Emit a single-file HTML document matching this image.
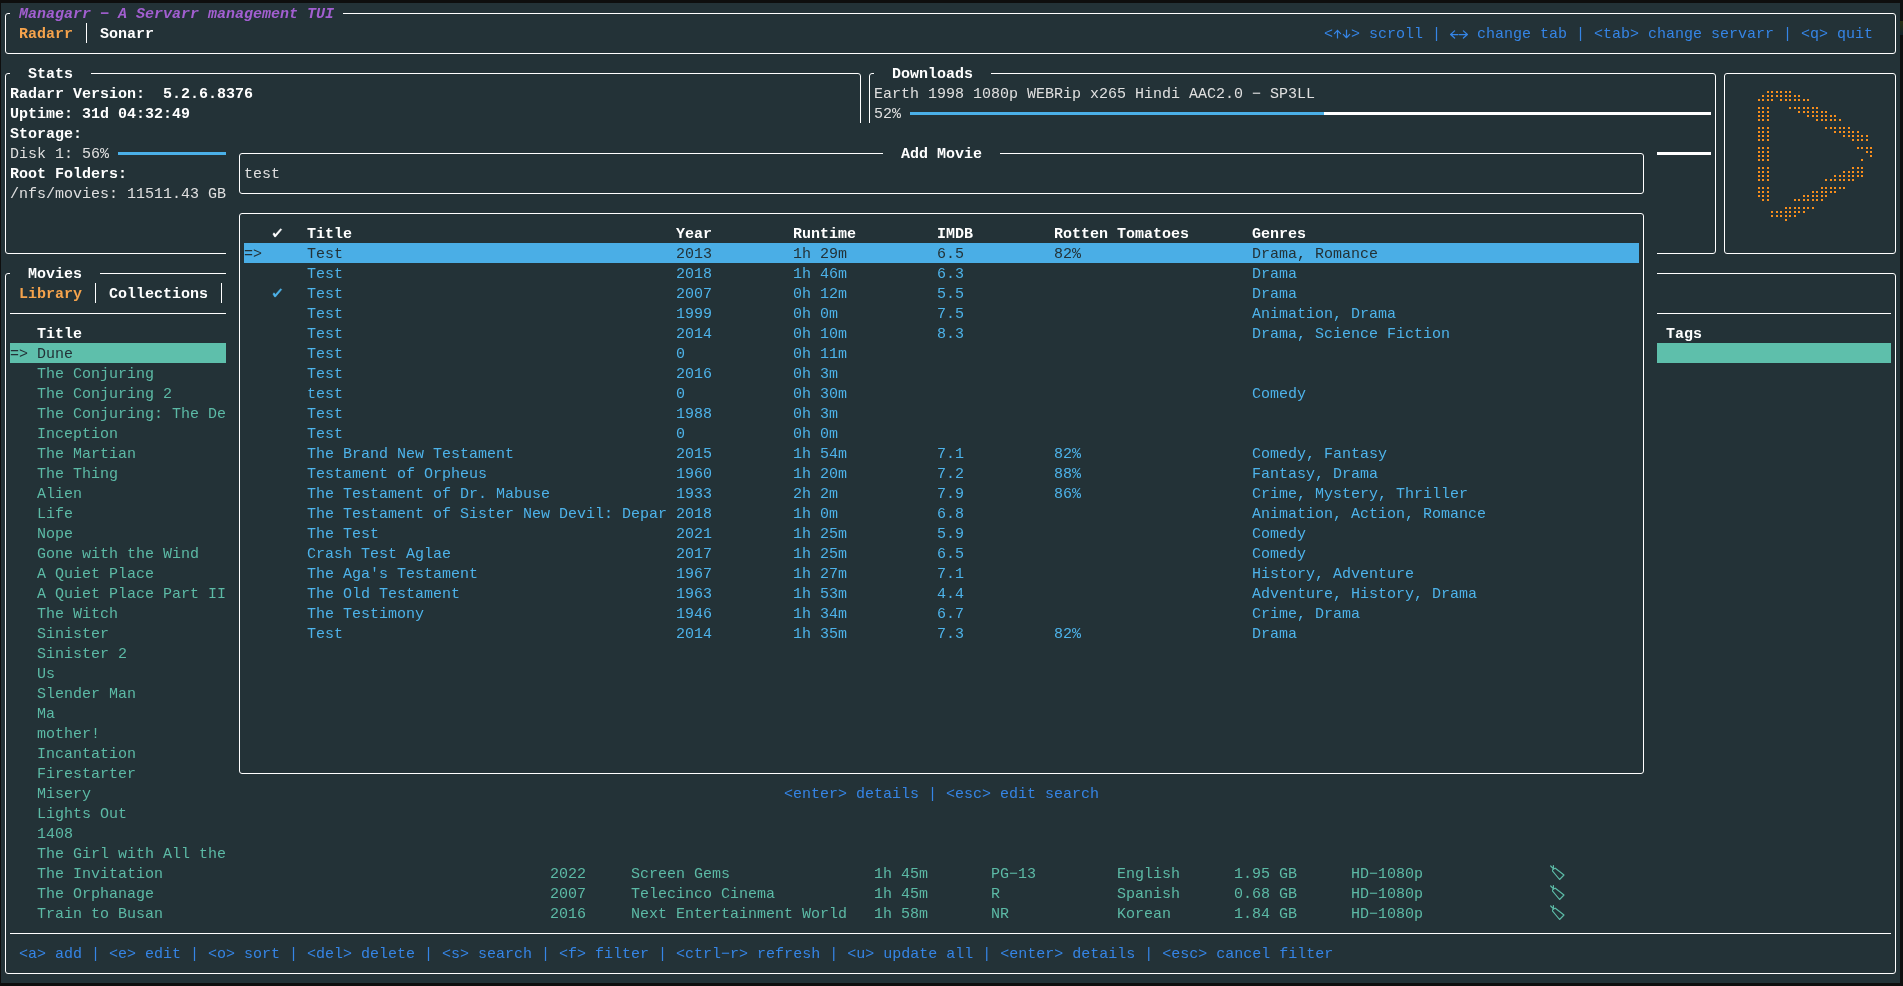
<!DOCTYPE html>
<html><head><meta charset="utf-8"><title>Managarr</title>
<style>
html,body{margin:0;padding:0;background:#0e0e0e;width:1903px;height:986px;overflow:hidden}
#term{position:absolute;left:1px;top:3px;width:1899px;height:980px;background:#233237;overflow:hidden}
#scr{position:absolute;left:0;top:0;width:1903px;height:986px;will-change:transform}
.t{position:absolute;white-space:pre;font-family:"Liberation Mono",monospace;font-size:15px;line-height:20px;height:20px;padding-top:2px;box-sizing:border-box}
.r{position:absolute}
.b{position:absolute;box-sizing:border-box;border:1px solid #fff}
.s{position:absolute;overflow:visible}
</style></head><body>
<div id="term"></div>
<div id="scr">
<div class="b" style="left:5px;top:13px;width:1891px;height:41px;border-color:#ffffff;border-radius:3px"></div>
<div class="t" style="left:10px;top:3px;color:#a25fd0;font-weight:bold;font-style:italic;background:#233237"> Managarr − A Servarr management TUI </div>
<div class="t" style="left:19px;top:23px;color:#f5a34c;font-weight:bold">Radarr</div>
<div class="r" style="left:86px;top:23px;width:1px;height:20px;background:#ffffff"></div>
<div class="t" style="left:100px;top:23px;color:#ffffff;font-weight:bold">Sonarr</div>
<div class="t" style="left:1324px;top:23px;color:#3585e6">&lt;  &gt; scroll |    change tab | &lt;tab&gt; change servarr | &lt;q&gt; quit</div>
<svg class="s" style="left:1333px;top:23px" width="18" height="20" viewBox="0 0 18 20" fill="none" stroke="#3585e6" stroke-width="1.25" stroke-linecap="round" stroke-linejoin="round"><path d="M4.5 7.4 V14.9 M1.4 10.6 L4.5 7.4 L7.6 10.6"/><path d="M13.5 7.1 V14.6 M10.3 11.4 L13.5 14.7 L16.7 11.4"/></svg>
<svg class="s" style="left:1450px;top:23px" width="18" height="20" viewBox="0 0 18 20" fill="none" stroke="#3585e6" stroke-width="1.25" stroke-linecap="round" stroke-linejoin="round"><path d="M0.6 11.5 H8 M4.6 7.9 L0.6 11.5 L4.6 15.0"/><path d="M9.4 11.5 H17.4 M13.4 7.9 L17.4 11.5 L13.4 15.0"/></svg>
<div class="b" style="left:5px;top:73px;width:856px;height:181px;border-color:#ffffff;border-radius:3px"></div>
<div class="t" style="left:10px;top:63px;color:#ffffff;font-weight:bold;background:#233237">  Stats  </div>
<div class="t" style="left:10px;top:83px;color:#ffffff;font-weight:bold">Radarr Version:  5.2.6.8376</div>
<div class="t" style="left:10px;top:103px;color:#ffffff;font-weight:bold">Uptime: 31d 04:32:49</div>
<div class="t" style="left:10px;top:123px;color:#ffffff;font-weight:bold">Storage:</div>
<div class="t" style="left:10px;top:143px;color:#e0e0e0">Disk 1: 56%</div>
<div class="r" style="left:118px;top:152px;width:738px;height:3px;background:#4ab0e8"></div>
<div class="t" style="left:10px;top:163px;color:#ffffff;font-weight:bold">Root Folders:</div>
<div class="t" style="left:10px;top:183px;color:#e0e0e0">/nfs/movies: 11511.43 GB</div>
<div class="b" style="left:869px;top:73px;width:847px;height:181px;border-color:#ffffff;border-radius:3px"></div>
<div class="t" style="left:874px;top:63px;color:#ffffff;font-weight:bold;background:#233237">  Downloads  </div>
<div class="t" style="left:874px;top:83px;color:#e0e0e0">Earth 1998 1080p WEBRip x265 Hindi AAC2.0 − SP3LL</div>
<div class="t" style="left:874px;top:103px;color:#e0e0e0">52%</div>
<div class="r" style="left:910px;top:112px;width:414px;height:3px;background:#4ab0e8"></div>
<div class="r" style="left:1324px;top:112px;width:387px;height:3px;background:#ffffff"></div>
<div class="r" style="left:1657px;top:152px;width:54px;height:3px;background:#ffffff"></div>
<div class="b" style="left:1724px;top:73px;width:172px;height:181px;border-color:#ffffff;border-radius:3px"></div>
<div class="b" style="left:5px;top:273px;width:1891px;height:701px;border-color:#ffffff;border-radius:3px"></div>
<div class="t" style="left:10px;top:263px;color:#ffffff;font-weight:bold;background:#233237">  Movies  </div>
<div class="t" style="left:19px;top:283px;color:#f5a34c;font-weight:bold">Library</div>
<div class="r" style="left:95px;top:283px;width:1px;height:20px;background:#ffffff"></div>
<div class="t" style="left:109px;top:283px;color:#ffffff;font-weight:bold">Collections</div>
<div class="r" style="left:221px;top:283px;width:1px;height:20px;background:#ffffff"></div>
<div class="r" style="left:10px;top:313px;width:1881px;height:1px;background:#ffffff"></div>
<div class="t" style="left:37px;top:323px;color:#ffffff;font-weight:bold">Title</div>
<div class="t" style="left:1666px;top:323px;color:#ffffff;font-weight:bold">Tags</div>
<div class="r" style="left:10px;top:343px;width:1881px;height:20px;background:#5ebfab"></div>
<div class="t" style="left:10px;top:343px;color:#233237">=&gt; Dune</div>
<div class="t" style="left:37px;top:363px;color:#5cbaa6">The Conjuring</div>
<div class="t" style="left:37px;top:383px;color:#5cbaa6">The Conjuring 2</div>
<div class="t" style="left:37px;top:403px;color:#5cbaa6">The Conjuring: The De</div>
<div class="t" style="left:37px;top:423px;color:#5cbaa6">Inception</div>
<div class="t" style="left:37px;top:443px;color:#5cbaa6">The Martian</div>
<div class="t" style="left:37px;top:463px;color:#5cbaa6">The Thing</div>
<div class="t" style="left:37px;top:483px;color:#5cbaa6">Alien</div>
<div class="t" style="left:37px;top:503px;color:#5cbaa6">Life</div>
<div class="t" style="left:37px;top:523px;color:#5cbaa6">Nope</div>
<div class="t" style="left:37px;top:543px;color:#5cbaa6">Gone with the Wind</div>
<div class="t" style="left:37px;top:563px;color:#5cbaa6">A Quiet Place</div>
<div class="t" style="left:37px;top:583px;color:#5cbaa6">A Quiet Place Part II</div>
<div class="t" style="left:37px;top:603px;color:#5cbaa6">The Witch</div>
<div class="t" style="left:37px;top:623px;color:#5cbaa6">Sinister</div>
<div class="t" style="left:37px;top:643px;color:#5cbaa6">Sinister 2</div>
<div class="t" style="left:37px;top:663px;color:#5cbaa6">Us</div>
<div class="t" style="left:37px;top:683px;color:#5cbaa6">Slender Man</div>
<div class="t" style="left:37px;top:703px;color:#5cbaa6">Ma</div>
<div class="t" style="left:37px;top:723px;color:#5cbaa6">mother!</div>
<div class="t" style="left:37px;top:743px;color:#5cbaa6">Incantation</div>
<div class="t" style="left:37px;top:763px;color:#5cbaa6">Firestarter</div>
<div class="t" style="left:37px;top:783px;color:#5cbaa6">Misery</div>
<div class="t" style="left:37px;top:803px;color:#5cbaa6">Lights Out</div>
<div class="t" style="left:37px;top:823px;color:#5cbaa6">1408</div>
<div class="t" style="left:37px;top:843px;color:#5cbaa6">The Girl with All the</div>
<div class="t" style="left:37px;top:863px;color:#5cbaa6">The Invitation</div>
<div class="t" style="left:37px;top:883px;color:#5cbaa6">The Orphanage</div>
<div class="t" style="left:37px;top:903px;color:#5cbaa6">Train to Busan</div>
<div class="t" style="left:550px;top:863px;color:#5cbaa6">2022</div>
<div class="t" style="left:631px;top:863px;color:#5cbaa6">Screen Gems</div>
<div class="t" style="left:874px;top:863px;color:#5cbaa6">1h 45m</div>
<div class="t" style="left:991px;top:863px;color:#5cbaa6">PG−13</div>
<div class="t" style="left:1117px;top:863px;color:#5cbaa6">English</div>
<div class="t" style="left:1234px;top:863px;color:#5cbaa6">1.95 GB</div>
<div class="t" style="left:1351px;top:863px;color:#5cbaa6">HD−1080p</div>
<svg class="s" style="left:1547px;top:863px" width="20" height="20" viewBox="0 0 20 20"><path d="M3.7 3.0 L6.5 5.9 M6.4 2.6 L6.5 5.9" stroke="#5cbaa6" stroke-width="1.2" fill="none" stroke-linecap="round"/><path d="M8.3 5.2 L17.0 12.0 L12.6 16.5 L5.6 8.2 Q5.0 6.6 6.5 5.9 Z" stroke="#5cbaa6" stroke-width="1.15" fill="none" stroke-linejoin="round"/></svg>
<div class="t" style="left:550px;top:883px;color:#5cbaa6">2007</div>
<div class="t" style="left:631px;top:883px;color:#5cbaa6">Telecinco Cinema</div>
<div class="t" style="left:874px;top:883px;color:#5cbaa6">1h 45m</div>
<div class="t" style="left:991px;top:883px;color:#5cbaa6">R</div>
<div class="t" style="left:1117px;top:883px;color:#5cbaa6">Spanish</div>
<div class="t" style="left:1234px;top:883px;color:#5cbaa6">0.68 GB</div>
<div class="t" style="left:1351px;top:883px;color:#5cbaa6">HD−1080p</div>
<svg class="s" style="left:1547px;top:883px" width="20" height="20" viewBox="0 0 20 20"><path d="M3.7 3.0 L6.5 5.9 M6.4 2.6 L6.5 5.9" stroke="#5cbaa6" stroke-width="1.2" fill="none" stroke-linecap="round"/><path d="M8.3 5.2 L17.0 12.0 L12.6 16.5 L5.6 8.2 Q5.0 6.6 6.5 5.9 Z" stroke="#5cbaa6" stroke-width="1.15" fill="none" stroke-linejoin="round"/></svg>
<div class="t" style="left:550px;top:903px;color:#5cbaa6">2016</div>
<div class="t" style="left:631px;top:903px;color:#5cbaa6">Next Entertainment World</div>
<div class="t" style="left:874px;top:903px;color:#5cbaa6">1h 58m</div>
<div class="t" style="left:991px;top:903px;color:#5cbaa6">NR</div>
<div class="t" style="left:1117px;top:903px;color:#5cbaa6">Korean</div>
<div class="t" style="left:1234px;top:903px;color:#5cbaa6">1.84 GB</div>
<div class="t" style="left:1351px;top:903px;color:#5cbaa6">HD−1080p</div>
<svg class="s" style="left:1547px;top:903px" width="20" height="20" viewBox="0 0 20 20"><path d="M3.7 3.0 L6.5 5.9 M6.4 2.6 L6.5 5.9" stroke="#5cbaa6" stroke-width="1.2" fill="none" stroke-linecap="round"/><path d="M8.3 5.2 L17.0 12.0 L12.6 16.5 L5.6 8.2 Q5.0 6.6 6.5 5.9 Z" stroke="#5cbaa6" stroke-width="1.15" fill="none" stroke-linejoin="round"/></svg>
<div class="r" style="left:10px;top:933px;width:1881px;height:1px;background:#ffffff"></div>
<div class="t" style="left:19px;top:943px;color:#3585e6">&lt;a&gt; add | &lt;e&gt; edit | &lt;o&gt; sort | &lt;del&gt; delete | &lt;s&gt; search | &lt;f&gt; filter | &lt;ctrl−r&gt; refresh | &lt;u&gt; update all | &lt;enter&gt; details | &lt;esc&gt; cancel filter</div>
<div class="r" style="left:226px;top:123px;width:1431px;height:740px;background:#233237"></div>
<div class="b" style="left:239px;top:153px;width:1405px;height:41px;border-color:#ffffff;border-radius:3px"></div>
<div class="t" style="left:883px;top:143px;color:#ffffff;font-weight:bold;background:#233237">  Add Movie  </div>
<div class="t" style="left:244px;top:163px;color:#e0e0e0">test</div>
<div class="b" style="left:239px;top:213px;width:1405px;height:561px;border-color:#ffffff;border-radius:3px"></div>
<svg class="s" style="left:271px;top:223px" width="14" height="20" viewBox="0 0 14 20"><path d="M1.9 10.9 L3.1 9.8 L4.4 11.5 L9.6 5.7 L10.7 6.6 L4.5 13.9 L3.6 13.9 Z" fill="#ffffff" stroke="#ffffff" stroke-width="0.6" stroke-linejoin="round"/></svg>
<div class="t" style="left:307px;top:223px;color:#ffffff;font-weight:bold">Title</div>
<div class="t" style="left:676px;top:223px;color:#ffffff;font-weight:bold">Year</div>
<div class="t" style="left:793px;top:223px;color:#ffffff;font-weight:bold">Runtime</div>
<div class="t" style="left:937px;top:223px;color:#ffffff;font-weight:bold">IMDB</div>
<div class="t" style="left:1054px;top:223px;color:#ffffff;font-weight:bold">Rotten Tomatoes</div>
<div class="t" style="left:1252px;top:223px;color:#ffffff;font-weight:bold">Genres</div>
<div class="r" style="left:244px;top:243px;width:1395px;height:20px;background:#4aaee6"></div>
<div class="t" style="left:244px;top:243px;color:#233237">=&gt;</div>
<div class="t" style="left:307px;top:243px;color:#233237">Test</div>
<div class="t" style="left:676px;top:243px;color:#233237">2013</div>
<div class="t" style="left:793px;top:243px;color:#233237">1h 29m</div>
<div class="t" style="left:937px;top:243px;color:#233237">6.5</div>
<div class="t" style="left:1054px;top:243px;color:#233237">82%</div>
<div class="t" style="left:1252px;top:243px;color:#233237">Drama, Romance</div>
<div class="t" style="left:307px;top:263px;color:#4db3ea">Test</div>
<div class="t" style="left:676px;top:263px;color:#4db3ea">2018</div>
<div class="t" style="left:793px;top:263px;color:#4db3ea">1h 46m</div>
<div class="t" style="left:937px;top:263px;color:#4db3ea">6.3</div>
<div class="t" style="left:1252px;top:263px;color:#4db3ea">Drama</div>
<div class="t" style="left:307px;top:283px;color:#4db3ea">Test</div>
<div class="t" style="left:676px;top:283px;color:#4db3ea">2007</div>
<div class="t" style="left:793px;top:283px;color:#4db3ea">0h 12m</div>
<div class="t" style="left:937px;top:283px;color:#4db3ea">5.5</div>
<div class="t" style="left:1252px;top:283px;color:#4db3ea">Drama</div>
<div class="t" style="left:307px;top:303px;color:#4db3ea">Test</div>
<div class="t" style="left:676px;top:303px;color:#4db3ea">1999</div>
<div class="t" style="left:793px;top:303px;color:#4db3ea">0h 0m</div>
<div class="t" style="left:937px;top:303px;color:#4db3ea">7.5</div>
<div class="t" style="left:1252px;top:303px;color:#4db3ea">Animation, Drama</div>
<div class="t" style="left:307px;top:323px;color:#4db3ea">Test</div>
<div class="t" style="left:676px;top:323px;color:#4db3ea">2014</div>
<div class="t" style="left:793px;top:323px;color:#4db3ea">0h 10m</div>
<div class="t" style="left:937px;top:323px;color:#4db3ea">8.3</div>
<div class="t" style="left:1252px;top:323px;color:#4db3ea">Drama, Science Fiction</div>
<div class="t" style="left:307px;top:343px;color:#4db3ea">Test</div>
<div class="t" style="left:676px;top:343px;color:#4db3ea">0</div>
<div class="t" style="left:793px;top:343px;color:#4db3ea">0h 11m</div>
<div class="t" style="left:307px;top:363px;color:#4db3ea">Test</div>
<div class="t" style="left:676px;top:363px;color:#4db3ea">2016</div>
<div class="t" style="left:793px;top:363px;color:#4db3ea">0h 3m</div>
<div class="t" style="left:307px;top:383px;color:#4db3ea">test</div>
<div class="t" style="left:676px;top:383px;color:#4db3ea">0</div>
<div class="t" style="left:793px;top:383px;color:#4db3ea">0h 30m</div>
<div class="t" style="left:1252px;top:383px;color:#4db3ea">Comedy</div>
<div class="t" style="left:307px;top:403px;color:#4db3ea">Test</div>
<div class="t" style="left:676px;top:403px;color:#4db3ea">1988</div>
<div class="t" style="left:793px;top:403px;color:#4db3ea">0h 3m</div>
<div class="t" style="left:307px;top:423px;color:#4db3ea">Test</div>
<div class="t" style="left:676px;top:423px;color:#4db3ea">0</div>
<div class="t" style="left:793px;top:423px;color:#4db3ea">0h 0m</div>
<div class="t" style="left:307px;top:443px;color:#4db3ea">The Brand New Testament</div>
<div class="t" style="left:676px;top:443px;color:#4db3ea">2015</div>
<div class="t" style="left:793px;top:443px;color:#4db3ea">1h 54m</div>
<div class="t" style="left:937px;top:443px;color:#4db3ea">7.1</div>
<div class="t" style="left:1054px;top:443px;color:#4db3ea">82%</div>
<div class="t" style="left:1252px;top:443px;color:#4db3ea">Comedy, Fantasy</div>
<div class="t" style="left:307px;top:463px;color:#4db3ea">Testament of Orpheus</div>
<div class="t" style="left:676px;top:463px;color:#4db3ea">1960</div>
<div class="t" style="left:793px;top:463px;color:#4db3ea">1h 20m</div>
<div class="t" style="left:937px;top:463px;color:#4db3ea">7.2</div>
<div class="t" style="left:1054px;top:463px;color:#4db3ea">88%</div>
<div class="t" style="left:1252px;top:463px;color:#4db3ea">Fantasy, Drama</div>
<div class="t" style="left:307px;top:483px;color:#4db3ea">The Testament of Dr. Mabuse</div>
<div class="t" style="left:676px;top:483px;color:#4db3ea">1933</div>
<div class="t" style="left:793px;top:483px;color:#4db3ea">2h 2m</div>
<div class="t" style="left:937px;top:483px;color:#4db3ea">7.9</div>
<div class="t" style="left:1054px;top:483px;color:#4db3ea">86%</div>
<div class="t" style="left:1252px;top:483px;color:#4db3ea">Crime, Mystery, Thriller</div>
<div class="t" style="left:307px;top:503px;color:#4db3ea">The Testament of Sister New Devil: Depar</div>
<div class="t" style="left:676px;top:503px;color:#4db3ea">2018</div>
<div class="t" style="left:793px;top:503px;color:#4db3ea">1h 0m</div>
<div class="t" style="left:937px;top:503px;color:#4db3ea">6.8</div>
<div class="t" style="left:1252px;top:503px;color:#4db3ea">Animation, Action, Romance</div>
<div class="t" style="left:307px;top:523px;color:#4db3ea">The Test</div>
<div class="t" style="left:676px;top:523px;color:#4db3ea">2021</div>
<div class="t" style="left:793px;top:523px;color:#4db3ea">1h 25m</div>
<div class="t" style="left:937px;top:523px;color:#4db3ea">5.9</div>
<div class="t" style="left:1252px;top:523px;color:#4db3ea">Comedy</div>
<div class="t" style="left:307px;top:543px;color:#4db3ea">Crash Test Aglae</div>
<div class="t" style="left:676px;top:543px;color:#4db3ea">2017</div>
<div class="t" style="left:793px;top:543px;color:#4db3ea">1h 25m</div>
<div class="t" style="left:937px;top:543px;color:#4db3ea">6.5</div>
<div class="t" style="left:1252px;top:543px;color:#4db3ea">Comedy</div>
<div class="t" style="left:307px;top:563px;color:#4db3ea">The Aga&#x27;s Testament</div>
<div class="t" style="left:676px;top:563px;color:#4db3ea">1967</div>
<div class="t" style="left:793px;top:563px;color:#4db3ea">1h 27m</div>
<div class="t" style="left:937px;top:563px;color:#4db3ea">7.1</div>
<div class="t" style="left:1252px;top:563px;color:#4db3ea">History, Adventure</div>
<div class="t" style="left:307px;top:583px;color:#4db3ea">The Old Testament</div>
<div class="t" style="left:676px;top:583px;color:#4db3ea">1963</div>
<div class="t" style="left:793px;top:583px;color:#4db3ea">1h 53m</div>
<div class="t" style="left:937px;top:583px;color:#4db3ea">4.4</div>
<div class="t" style="left:1252px;top:583px;color:#4db3ea">Adventure, History, Drama</div>
<div class="t" style="left:307px;top:603px;color:#4db3ea">The Testimony</div>
<div class="t" style="left:676px;top:603px;color:#4db3ea">1946</div>
<div class="t" style="left:793px;top:603px;color:#4db3ea">1h 34m</div>
<div class="t" style="left:937px;top:603px;color:#4db3ea">6.7</div>
<div class="t" style="left:1252px;top:603px;color:#4db3ea">Crime, Drama</div>
<div class="t" style="left:307px;top:623px;color:#4db3ea">Test</div>
<div class="t" style="left:676px;top:623px;color:#4db3ea">2014</div>
<div class="t" style="left:793px;top:623px;color:#4db3ea">1h 35m</div>
<div class="t" style="left:937px;top:623px;color:#4db3ea">7.3</div>
<div class="t" style="left:1054px;top:623px;color:#4db3ea">82%</div>
<div class="t" style="left:1252px;top:623px;color:#4db3ea">Drama</div>
<svg class="s" style="left:271px;top:283px" width="14" height="20" viewBox="0 0 14 20"><path d="M1.9 10.9 L3.1 9.8 L4.4 11.5 L9.6 5.7 L10.7 6.6 L4.5 13.9 L3.6 13.9 Z" fill="#4db3ea" stroke="#4db3ea" stroke-width="0.6" stroke-linejoin="round"/></svg>
<div class="t" style="left:784px;top:783px;color:#3585e6">&lt;enter&gt; details | &lt;esc&gt; edit search</div>
<svg class="s" style="left:0;top:0" width="1903" height="986"><path d="M1767 91h2v2h-2zM1771 91h2v2h-2zM1776 91h2v2h-2zM1780 91h2v2h-2zM1785 91h2v2h-2zM1789 91h2v2h-2zM1762 95h2v2h-2zM1767 95h2v2h-2zM1771 95h2v2h-2zM1776 95h2v2h-2zM1780 95h2v2h-2zM1785 95h2v2h-2zM1789 95h2v2h-2zM1794 95h2v2h-2zM1798 95h2v2h-2zM1758 99h2v2h-2zM1762 99h2v2h-2zM1767 99h2v2h-2zM1771 99h2v2h-2zM1780 99h2v2h-2zM1785 99h2v2h-2zM1789 99h2v2h-2zM1794 99h2v2h-2zM1798 99h2v2h-2zM1803 99h2v2h-2zM1807 99h2v2h-2zM1758 107h2v2h-2zM1762 107h2v2h-2zM1767 107h2v2h-2zM1789 107h2v2h-2zM1794 107h2v2h-2zM1798 107h2v2h-2zM1803 107h2v2h-2zM1807 107h2v2h-2zM1812 107h2v2h-2zM1816 107h2v2h-2zM1758 111h2v2h-2zM1762 111h2v2h-2zM1767 111h2v2h-2zM1798 111h2v2h-2zM1803 111h2v2h-2zM1807 111h2v2h-2zM1812 111h2v2h-2zM1816 111h2v2h-2zM1821 111h2v2h-2zM1825 111h2v2h-2zM1758 115h2v2h-2zM1762 115h2v2h-2zM1767 115h2v2h-2zM1807 115h2v2h-2zM1812 115h2v2h-2zM1816 115h2v2h-2zM1821 115h2v2h-2zM1825 115h2v2h-2zM1830 115h2v2h-2zM1834 115h2v2h-2zM1758 119h2v2h-2zM1762 119h2v2h-2zM1767 119h2v2h-2zM1816 119h2v2h-2zM1821 119h2v2h-2zM1825 119h2v2h-2zM1830 119h2v2h-2zM1834 119h2v2h-2zM1839 119h2v2h-2zM1758 127h2v2h-2zM1762 127h2v2h-2zM1767 127h2v2h-2zM1825 127h2v2h-2zM1830 127h2v2h-2zM1834 127h2v2h-2zM1839 127h2v2h-2zM1843 127h2v2h-2zM1848 127h2v2h-2zM1758 131h2v2h-2zM1762 131h2v2h-2zM1767 131h2v2h-2zM1834 131h2v2h-2zM1839 131h2v2h-2zM1843 131h2v2h-2zM1848 131h2v2h-2zM1852 131h2v2h-2zM1857 131h2v2h-2zM1758 135h2v2h-2zM1762 135h2v2h-2zM1767 135h2v2h-2zM1843 135h2v2h-2zM1848 135h2v2h-2zM1852 135h2v2h-2zM1857 135h2v2h-2zM1861 135h2v2h-2zM1866 135h2v2h-2zM1758 139h2v2h-2zM1762 139h2v2h-2zM1767 139h2v2h-2zM1852 139h2v2h-2zM1857 139h2v2h-2zM1861 139h2v2h-2zM1866 139h2v2h-2zM1758 147h2v2h-2zM1762 147h2v2h-2zM1767 147h2v2h-2zM1857 147h2v2h-2zM1861 147h2v2h-2zM1866 147h2v2h-2zM1870 147h2v2h-2zM1758 151h2v2h-2zM1762 151h2v2h-2zM1767 151h2v2h-2zM1866 151h2v2h-2zM1870 151h2v2h-2zM1758 155h2v2h-2zM1762 155h2v2h-2zM1767 155h2v2h-2zM1870 155h2v2h-2zM1758 159h2v2h-2zM1762 159h2v2h-2zM1767 159h2v2h-2zM1861 159h2v2h-2zM1758 167h2v2h-2zM1762 167h2v2h-2zM1767 167h2v2h-2zM1852 167h2v2h-2zM1857 167h2v2h-2zM1861 167h2v2h-2zM1758 171h2v2h-2zM1762 171h2v2h-2zM1767 171h2v2h-2zM1843 171h2v2h-2zM1848 171h2v2h-2zM1852 171h2v2h-2zM1857 171h2v2h-2zM1861 171h2v2h-2zM1758 175h2v2h-2zM1762 175h2v2h-2zM1767 175h2v2h-2zM1834 175h2v2h-2zM1839 175h2v2h-2zM1843 175h2v2h-2zM1848 175h2v2h-2zM1852 175h2v2h-2zM1857 175h2v2h-2zM1861 175h2v2h-2zM1758 179h2v2h-2zM1762 179h2v2h-2zM1767 179h2v2h-2zM1825 179h2v2h-2zM1830 179h2v2h-2zM1834 179h2v2h-2zM1839 179h2v2h-2zM1843 179h2v2h-2zM1848 179h2v2h-2zM1852 179h2v2h-2zM1758 187h2v2h-2zM1762 187h2v2h-2zM1767 187h2v2h-2zM1821 187h2v2h-2zM1825 187h2v2h-2zM1830 187h2v2h-2zM1834 187h2v2h-2zM1839 187h2v2h-2zM1843 187h2v2h-2zM1758 191h2v2h-2zM1762 191h2v2h-2zM1767 191h2v2h-2zM1812 191h2v2h-2zM1816 191h2v2h-2zM1821 191h2v2h-2zM1825 191h2v2h-2zM1830 191h2v2h-2zM1834 191h2v2h-2zM1758 195h2v2h-2zM1762 195h2v2h-2zM1767 195h2v2h-2zM1803 195h2v2h-2zM1807 195h2v2h-2zM1812 195h2v2h-2zM1816 195h2v2h-2zM1821 195h2v2h-2zM1825 195h2v2h-2zM1762 199h2v2h-2zM1767 199h2v2h-2zM1794 199h2v2h-2zM1798 199h2v2h-2zM1803 199h2v2h-2zM1807 199h2v2h-2zM1812 199h2v2h-2zM1816 199h2v2h-2zM1821 199h2v2h-2zM1785 207h2v2h-2zM1789 207h2v2h-2zM1794 207h2v2h-2zM1798 207h2v2h-2zM1803 207h2v2h-2zM1807 207h2v2h-2zM1812 207h2v2h-2zM1771 211h2v2h-2zM1776 211h2v2h-2zM1780 211h2v2h-2zM1785 211h2v2h-2zM1789 211h2v2h-2zM1794 211h2v2h-2zM1798 211h2v2h-2zM1803 211h2v2h-2zM1771 215h2v2h-2zM1776 215h2v2h-2zM1780 215h2v2h-2zM1785 215h2v2h-2zM1789 215h2v2h-2zM1794 215h2v2h-2zM1785 219h2v2h-2z" fill="#f88e1c"/></svg>
<div class="r" style="left:1900px;top:21px;width:3px;height:14px;background:linear-gradient(#2b3012,#12222a)"></div>
</div>
</body></html>
